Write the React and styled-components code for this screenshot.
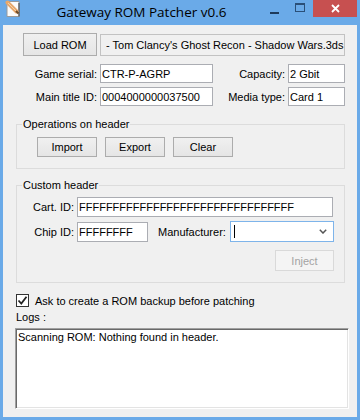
import styled, { createGlobalStyle } from 'styled-components';

const GlobalStyle = createGlobalStyle`
  html, body {
    margin: 0;
    padding: 0;
    background: #fff;
  }
`;

const Window = styled.div`
  width: 360px;
  height: 420px;
  background: #6aaae8;
  display: flex;
  flex-direction: column;
  overflow: hidden;
  font-family: "Liberation Sans", Arial, sans-serif;
  font-size: 11px;
  color: #000;
`;

const TitleBar = styled.div`
  height: 25px;
  flex-shrink: 0;
  display: flex;
  align-items: flex-start;
`;

const AppIcon = styled.div`
  width: 18px;
  height: 18px;
  margin: 0 0 0 4px;
`;

const Title = styled.div`
  flex: 1;
  text-align: center;
  font-family: "Open Sans", "Noto Sans", sans-serif;
  font-size: 13.5px;
  line-height: 24px;
  color: #000;
`;

const Caption = styled.div`
  display: flex;
  margin-right: 3px;
`;

const CaptionButton = styled.div`
  width: ${p => p.$w}px;
  height: 17px;
  display: flex;
  justify-content: center;
  align-items: ${p => p.$align || 'center'};
  background: ${p => p.$bg || 'transparent'};
`;

const MinGlyph = styled.span`
  width: 9px;
  height: 2px;
  margin-top: 12px;
  background: #1e3a5a;
`;

const MaxGlyph = styled.span`
  width: 8px;
  height: 6px;
  margin-top: 3px;
  border: 1px solid #2a4f78;
  border-top-width: 2px;
`;

const Client = styled.div`
  flex: 1;
  min-height: 0;
  margin: 0 3px 3px;
  background: #f0f0f0;
  display: flex;
  flex-direction: column;
  overflow: hidden;
`;

const TopRow = styled.div`
  display: flex;
  align-items: center;
  margin: 8px 12px 0 20px;
  height: 23px;
`;

const Button = styled.button`
  box-sizing: border-box;
  width: ${p => p.$w}px;
  height: ${p => p.$h || 20}px;
  padding: 0;
  font: inherit;
  color: #000;
  background: linear-gradient(#f0f0f0, #e5e5e5);
  border: 1px solid #acacac;

  &:disabled {
    background: #f4f4f4;
    border-color: #d9d9d9;
    color: #a3a3a3;
  }
`;

const TextBox = styled.input`
  box-sizing: border-box;
  width: ${p => (p.$w ? `${p.$w}px` : 'auto')};
  flex: ${p => (p.$w ? 'none' : 1)};
  min-width: 0;
  height: ${p => p.$h || 20}px;
  margin: 0;
  padding: 0 0 0 ${p => p.$pl || 1}px;
  font: inherit;
  color: #000;
  background: ${p => (p.$readonly ? '#f0f0f0' : '#fff')};
  border: 1px solid ${p => (p.$readonly ? '#c2c2c2' : '#abadb3')};
  outline: none;
`;

const InfoGrid = styled.div`
  display: grid;
  grid-template-columns: 94px 113px 69px 57px;
  grid-auto-rows: 19px;
  column-gap: 3px;
  row-gap: 4px;
  margin-top: 8px;
  align-items: center;
`;

const Label = styled.label`
  text-align: right;
  white-space: nowrap;
  width: ${p => (p.$w ? `${p.$w}px` : 'auto')};
  margin-left: ${p => p.$ml || 0}px;
`;

const Group = styled.fieldset`
  box-sizing: border-box;
  width: 329px;
  min-width: 0;
  margin: ${p => p.$top}px 0 0 13px;
  padding: 0;
  border: 1px solid #dcdcdc;
`;

const Legend = styled.legend`
  margin-left: 5px;
  padding: 0 1px;
  line-height: 13px;
`;

const OpsBody = styled.div`
  display: flex;
  gap: 8px;
  padding: 6px 0 11px 20px;
`;

const CustomBody = styled.div`
  display: flex;
  flex-direction: column;
  gap: 4px;
  padding: 5px 10px 11px 0;
`;

const FieldRow = styled.div`
  display: flex;
  align-items: center;
  gap: 3px;
`;

const InjectRow = styled.div`
  display: flex;
  justify-content: flex-end;
  margin-top: 4px;
`;

const Combo = styled.div`
  box-sizing: border-box;
  width: 104px;
  height: 21px;
  margin-left: auto;
  display: flex;
  align-items: center;
  justify-content: space-between;
  padding: 0 6px 0 3px;
  background: #fff;
  border: 1px solid #7eb4ea;
`;

const Caret = styled.span`
  width: 1px;
  height: 13px;
  background: #000;
`;

const CheckRow = styled.label`
  display: flex;
  align-items: center;
  gap: 6px;
  margin: 11px 0 0 13px;
  height: 13px;
`;

const CheckBox = styled.span`
  box-sizing: border-box;
  width: 13px;
  height: 13px;
  display: flex;
  align-items: center;
  justify-content: center;
  background: #fff;
  border: 1px solid #333;
`;

const LogsLabel = styled.div`
  margin: 4px 0 0 13px;
  line-height: 13px;
`;

const Logs = styled.div`
  box-sizing: border-box;
  flex: none;
  width: 334px;
  height: 81px;
  margin: 4px 0 0 12px;
  padding: 2px 2px;
  line-height: 13px;
  white-space: pre-wrap;
  background: #fff;
  border-style: solid;
  border-width: 1px;
  border-color: #a0a0a0 #fff #fff #a0a0a0;
  box-shadow: inset 1px 1px 0 #696969, inset -1px -1px 0 #e3e3e3;
`;

export default function App() {
  return (
    <>
      <GlobalStyle />
      <Window>
        <TitleBar>
          <AppIcon>
            <svg width="18" height="18" viewBox="0 0 18 18">
              <path d="M3 1.5h12v15H3z" fill="#fbfbfb" stroke="#9a9a9a" />
              <path d="M15 3v13.5" stroke="#555" strokeWidth="1.2" />
              <path d="M3.5 2.5l9 9" stroke="#e7a86c" strokeWidth="4" strokeLinecap="round" />
              <path d="M12 11l2.5 2.5" stroke="#6b4a2a" strokeWidth="2" />
              <path d="M4 3l8 8" stroke="#f6d2a8" strokeWidth="1" />
            </svg>
          </AppIcon>
          <Title>Gateway ROM Patcher v0.6</Title>
          <Caption>
            <CaptionButton $w={26} $align="flex-start">
              <MinGlyph />
            </CaptionButton>
            <CaptionButton $w={26} $align="flex-start">
              <MaxGlyph />
            </CaptionButton>
            <CaptionButton $w={44} $bg="#c75050">
              <svg width="9" height="9" viewBox="0 0 9 9">
                <path d="M1 1l7 7M8 1L1 8" stroke="#fff" strokeWidth="1.8" />
              </svg>
            </CaptionButton>
          </Caption>
        </TitleBar>

        <Client>
          <TopRow>
            <Button $w={74} $h={23}>Load ROM</Button>
            <TextBox
              $readonly
              $h={22}
              $pl={5}
              style={{ marginLeft: 3 }}
              readOnly
              value="- Tom Clancy's Ghost Recon - Shadow Wars.3ds"
            />
          </TopRow>

          <InfoGrid>
            <Label>Game serial:</Label>
            <TextBox $h={19} readOnly value="CTR-P-AGRP" />
            <Label>Capacity:</Label>
            <TextBox $h={19} readOnly value="2 Gbit" />
            <Label>Main title ID:</Label>
            <TextBox $h={19} readOnly value="0004000000037500" />
            <Label>Media type:</Label>
            <TextBox $h={19} readOnly value="Card 1" />
          </InfoGrid>

          <Group $top={12}>
            <Legend>Operations on header</Legend>
            <OpsBody>
              <Button $w={60}>Import</Button>
              <Button $w={60}>Export</Button>
              <Button $w={60}>Clear</Button>
            </OpsBody>
          </Group>

          <Group $top={10}>
            <Legend>Custom header</Legend>
            <CustomBody>
              <FieldRow>
                <Label $w={57}>Cart. ID:</Label>
                <TextBox $w={256} readOnly value="FFFFFFFFFFFFFFFFFFFFFFFFFFFFFFFF" />
              </FieldRow>
              <FieldRow>
                <Label $w={57}>Chip ID:</Label>
                <TextBox $w={71} readOnly value="FFFFFFFF" />
                <Label $ml={7}>Manufacturer:</Label>
                <Combo>
                  <Caret />
                  <svg width="8" height="5" viewBox="0 0 8 5">
                    <path d="M0.8 0.8L4 4L7.2 0.8" fill="none" stroke="#555" strokeWidth="1.5" />
                  </svg>
                </Combo>
              </FieldRow>
              <InjectRow>
                <Button $w={59} $h={21} disabled>Inject</Button>
              </InjectRow>
            </CustomBody>
          </Group>

          <CheckRow>
            <CheckBox>
              <svg width="11" height="11" viewBox="0 0 11 11">
                <path d="M1.5 5.5l2.8 3L9.5 1.8" fill="none" stroke="#222" strokeWidth="1.8" />
              </svg>
            </CheckBox>
            Ask to create a ROM backup before patching
          </CheckRow>

          <LogsLabel>Logs :</LogsLabel>
          <Logs>Scanning ROM: Nothing found in header.</Logs>
        </Client>
      </Window>
    </>
  );
}
